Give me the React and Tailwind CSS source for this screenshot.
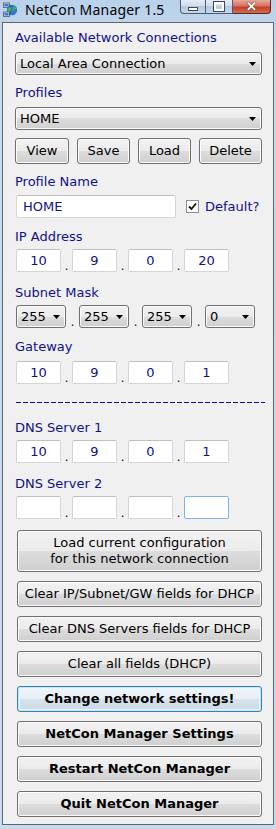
import React from "react";

const FONT = { fontFamily: '"DejaVu Sans", Verdana, sans-serif' };

function Label({ children, className = "" }) {
  return (
    <div className={"h-4 text-[13px] leading-4 text-[#10108a] whitespace-nowrap " + className}>
      {children}
    </div>
  );
}

function Arrow() {
  return (
    <svg width="7" height="4" viewBox="0 0 7 4" className="shrink-0">
      <path d="M0 0H7L3.5 4Z" fill="#000" />
    </svg>
  );
}

function Combo({ text, className = "" }) {
  return (
    <div
      className={
        "flex items-center justify-between h-[23px] rounded-[3px] border border-[#707070] bg-[linear-gradient(#f2f2f2_0%,#ebebeb_50%,#dddddd_50%,#cfcfcf_100%)] shadow-[inset_0_0_0_1px_#fbfbfb] pl-[4px] pr-[5px] text-[13px] text-black " +
        className
      }
    >
      <span className="leading-4">{text}</span>
      <Arrow />
    </div>
  );
}

function Btn({ children, className = "", bold = false, def = false }) {
  return (
    <div
      className={
        "flex items-center justify-center text-center rounded-[3px] border text-[13px] leading-4 text-black " +
        (def
          ? "border-[#3c7fb1] bg-[linear-gradient(#f0f6fa_0%,#e6eff6_50%,#d6e3ec_50%,#cadae6_100%)] shadow-[inset_0_0_0_1px_#bfe6fb,inset_0_0_0_2px_#e6f4fc] "
          : "border-[#707070] bg-[linear-gradient(#f2f2f2_0%,#ebebeb_50%,#dddddd_50%,#cfcfcf_100%)] shadow-[inset_0_0_0_1px_#fbfbfb] ") +
        (bold ? "font-bold " : "") +
        className
      }
    >
      {children}
    </div>
  );
}

function Box({ v, focus = false }) {
  return (
    <div
      className={
        "w-[45px] h-[23px] flex items-center justify-center bg-white rounded-[2px] border text-[13px] text-[#10108a] " +
        (focus ? "border-[#7eb4ea]" : "border-[#d5d5d5] border-t-[#c0c0c0]")
      }
    >
      {v}
    </div>
  );
}

function Dot() {
  return <span className="w-[11px] self-end text-center text-[13px] leading-[12px] text-[#10108a]">.</span>;
}

function IpRow({ vals, focusLast = false, className = "" }) {
  return (
    <div className={"flex ml-[1px] h-[23px] " + className}>
      <Box v={vals[0]} />
      <Dot />
      <Box v={vals[1]} />
      <Dot />
      <Box v={vals[2]} />
      <Dot />
      <Box v={vals[3]} focus={focusLast} />
    </div>
  );
}

function SubnetDot() {
  return <span className="w-[13px] self-end text-center text-[13px] leading-[12px] text-[#10108a]">.</span>;
}

function NetIcon() {
  return (
    <svg width="16" height="16" viewBox="0 0 16 16">
      <rect x="0.5" y="1" width="6" height="4.5" fill="#cfd8e2" stroke="#4a5a70" strokeWidth="0.8" />
      <rect x="1.5" y="2" width="4" height="2.5" fill="#3a7bd5" />
      <circle cx="9" cy="8" r="5.2" fill="#2f78c8" />
      <path d="M6 5.5c1.2-.6 2.4.2 2.2 1.4-.2 1-1.6.8-1.8 2-.2 1 .9 1.6.6 2.7-1.4-.6-2.4-2-2.4-3.6 0-1 .4-1.8 1.4-2.5zM10.5 4c1.4.4 2.6 1.6 3 3-.9.3-1.6-.4-2.3.2-.6.5-.1 1.6-.9 1.8-.8.1-1-1-.7-1.8.3-.9 1.5-1.1.9-3.2z" fill="#4cb84a" />
      <rect x="0.5" y="10" width="6" height="4.5" fill="#cfd8e2" stroke="#4a5a70" strokeWidth="0.8" />
      <rect x="1.5" y="11" width="4" height="2.5" fill="#3a7bd5" />
      <path d="M6.5 3.5L8 5M6.5 12L8 11" stroke="#333" strokeWidth="0.8" />
    </svg>
  );
}

export default function App() {
  return (
    <div
      style={FONT}
      className="w-[276px] h-[829px] flex flex-col bg-[linear-gradient(180deg,#b9d1ea_0px,#c6daee_60px,#c9dcef_100%)] overflow-hidden"
    >
      {/* Title bar */}
      <div className="h-[22px] flex items-start shrink-0">
        <div className="ml-[3px] mt-[2px]">
          <NetIcon />
        </div>
        <span
          className="ml-[6px] mt-[1px] text-[14px] leading-[18px] tracking-[0.2px] text-black"
          style={{ fontFamily: '"Noto Sans", "Open Sans", sans-serif' }}
        >
          NetCon Manager 1.5
        </span>
        <div className="ml-auto mr-[5px] flex h-[14px]">
          <div className="w-[26px] h-[14px] border border-t-0 border-[#4c5d72] rounded-bl-[4px] bg-[linear-gradient(#e3ecf6_0%,#cfdcec_50%,#b4c8df_50%,#c7d8ea_100%)] flex items-end justify-center pb-[2px]">
            <div className="w-[10px] h-[4px] bg-white border border-[#3a4a5e]" />
          </div>
          <div className="w-[27px] h-[14px] border border-t-0 border-l-0 border-[#4c5d72] bg-[linear-gradient(#e3ecf6_0%,#cfdcec_50%,#b4c8df_50%,#c7d8ea_100%)] flex items-center justify-center">
            <div className="w-[10px] h-[9px] border-[2px] border-white outline outline-1 outline-[#3a4a5e] mb-[1px]" />
          </div>
          <div className="w-[38px] h-[14px] border border-t-0 border-l-0 border-[#5a2a22] rounded-br-[4px] bg-[linear-gradient(#e9a99b_0%,#d7725f_45%,#c4402b_55%,#d46a50_100%)] flex items-center justify-center">
            <span className="text-white font-bold text-[13px] leading-[12px] [text-shadow:0_0_1px_#3a1a10,0_0_1px_#3a1a10]" style={{ fontFamily: '"Liberation Sans", sans-serif' }}>
              ✕
            </span>
          </div>
        </div>
      </div>

      {/* Client area */}
      <div className="ml-[2px] w-[272px] h-[803px] border border-[#5f666e] bg-[#f0f0f0] pl-[12px] flex flex-col shrink-0">
        <Label className="mt-[7px]">Available Network Connections</Label>
        <Combo text="Local Area Connection" className="mt-[6px] w-[247px]" />

        <Label className="mt-[10px]">Profiles</Label>
        <Combo text="HOME" className="mt-[6px] w-[247px]" />

        <div className="mt-[8px] flex h-[26px]">
          <Btn className="w-[54px] ml-0">View</Btn>
          <Btn className="w-[53px] ml-[8px]">Save</Btn>
          <Btn className="w-[53px] ml-[8px]">Load</Btn>
          <Btn className="w-[63px] ml-[8px]">Delete</Btn>
        </div>

        <Label className="mt-[10px]">Profile Name</Label>
        <div className="mt-[5px] flex items-center h-[23px] ml-[1px]">
          <div className="w-[160px] h-[23px] bg-white border border-[#d5d5d5] border-t-[#c0c0c0] rounded-[2px] flex items-center pl-[6px] text-[13px] text-[#10108a]">
            HOME
          </div>
          <div className="ml-[10px] w-[13px] h-[13px] border border-[#8e8f8f] bg-white flex items-center justify-center">
            <svg width="9" height="9" viewBox="0 0 9 9">
              <path d="M1 4.5L3.5 7L8 1.5" fill="none" stroke="#111" strokeWidth="1.8" />
            </svg>
          </div>
          <span className="ml-[6px] text-[13px] text-[#10108a]">Default?</span>
        </div>

        <Label className="mt-[11px]">IP Address</Label>
        <IpRow vals={["10", "9", "0", "20"]} className="mt-[4px]" />

        <Label className="mt-[13px]">Subnet Mask</Label>
        <div className="mt-[4px] flex ml-[1px] h-[23px]">
          <Combo text="255" className="w-[50px]" />
          <SubnetDot />
          <Combo text="255" className="w-[50px]" />
          <SubnetDot />
          <Combo text="255" className="w-[50px]" />
          <SubnetDot />
          <Combo text="0" className="w-[50px]" />
        </div>

        <Label className="mt-[11px]">Gateway</Label>
        <IpRow vals={["10", "9", "0", "1"]} className="mt-[6px]" />

        <div className="mt-[18px] ml-[1px] w-[249px] h-[1px] bg-[repeating-linear-gradient(90deg,#10108a_0px,#10108a_5px,transparent_5px,transparent_7px)]" />

        <Label className="mt-[17px]">DNS Server 1</Label>
        <IpRow vals={["10", "9", "0", "1"]} className="mt-[4px]" />

        <Label className="mt-[13px]">DNS Server 2</Label>
        <IpRow vals={["", "", "", ""]} focusLast className="mt-[4px]" />

        <Btn className="mt-[11px] ml-[2px] w-[245px] h-[42px] flex-col">
          <span>Load current configuration</span>
          <span>for this network connection</span>
        </Btn>
        <Btn className="mt-[9px] ml-[2px] w-[245px] h-[26px]">Clear IP/Subnet/GW fields for DHCP</Btn>
        <Btn className="mt-[9px] ml-[2px] w-[245px] h-[26px]">Clear DNS Servers fields for DHCP</Btn>
        <Btn className="mt-[9px] ml-[2px] w-[245px] h-[26px]">Clear all fields (DHCP)</Btn>
        <Btn def bold className="mt-[9px] ml-[2px] w-[245px] h-[26px]">Change network settings!</Btn>
        <Btn bold className="mt-[9px] ml-[2px] w-[245px] h-[26px]">NetCon Manager Settings</Btn>
        <Btn bold className="mt-[9px] ml-[2px] w-[245px] h-[26px]">Restart NetCon Manager</Btn>
        <Btn bold className="mt-[9px] ml-[2px] w-[245px] h-[26px]">Quit NetCon Manager</Btn>
      </div>
    </div>
  );
}
